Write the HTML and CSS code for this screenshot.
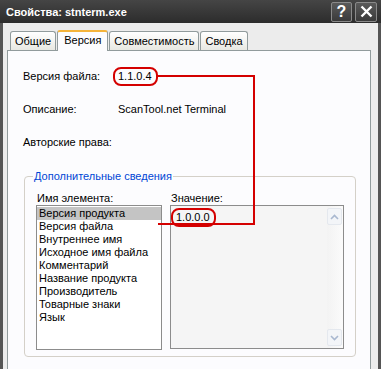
FILE: index.html
```html
<!DOCTYPE html>
<html lang="ru">
<head>
<meta charset="UTF-8">
<title>Свойства: stnterm.exe</title>
<link rel="stylesheet" href="styles.css">
</head>
<body>
<div class="window">
    <div class="titlebar">
        <span class="title">Свойства: stnterm.exe</span>
        <span class="title-btn">?</span>
        <span class="title-btn close">
            <svg width="13" height="13" viewBox="0 0 13 13"><path d="M1.5 1.5 L11.5 11.5 M11.5 1.5 L1.5 11.5" stroke="#fff" stroke-width="2.4"/></svg>
        </span>
    </div>

    <div class="dialog">
        <div class="tabs">
            <div class="tab">Общие</div>
            <div class="tab active">Версия</div>
            <div class="tab">Совместимость</div>
            <div class="tab">Сводка</div>
        </div>

        <div class="panel">
            <div class="field">
                <span class="field-label">Версия файла:</span>
                <span class="field-value"><span class="mark mark-file">1.1.0.4</span></span>
            </div>
            <div class="field">
                <span class="field-label">Описание:</span>
                <span class="field-value">ScanTool.net Terminal</span>
            </div>
            <div class="field">
                <span class="field-label">Авторские права:</span>
                <span class="field-value"></span>
            </div>

            <fieldset class="group">
                <legend>Дополнительные сведения</legend>
                <div class="group-cols">
                    <div class="col col-names">
                        <div class="col-title">Имя элемента:</div>
                        <ul class="listbox">
                            <li class="selected">Версия продукта</li>
                            <li>Версия файла</li>
                            <li>Внутреннее имя</li>
                            <li>Исходное имя файла</li>
                            <li>Комментарий</li>
                            <li>Название продукта</li>
                            <li>Производитель</li>
                            <li>Товарные знаки</li>
                            <li>Язык</li>
                        </ul>
                    </div>
                    <div class="col col-value">
                        <div class="col-title">Значение:</div>
                        <div class="valuebox">
                            <div class="value-text"><span class="mark mark-prod">1.0.0.0</span></div>
                            <div class="scrollbar">
                                <span class="scroll-btn">
                                    <svg width="9" height="6" viewBox="0 0 9 6"><path d="M1 5 L4.5 1.5 L8 5" fill="none" stroke="#a9b8d0" stroke-width="1.6"/></svg>
                                </span>
                                <span class="scroll-btn">
                                    <svg width="9" height="6" viewBox="0 0 9 6"><path d="M1 1 L4.5 4.5 L8 1" fill="none" stroke="#a9b8d0" stroke-width="1.6"/></svg>
                                </span>
                            </div>
                        </div>
                    </div>
                </div>
            </fieldset>
        </div>
    </div>

    <div class="connector"></div>
</div>
</body>
</html>
```

FILE: styles.css
```css
body {
    margin: 0;
    font-family: 'Liberation Sans', Arial, sans-serif;
    font-size: 11px;
    color: #000;
}
.window {
    position: relative;
    width: 381px;
    height: 369px;
    overflow: hidden;
    background-color: #ececec;
}
.titlebar {
    display: flex;
    align-items: center;
    height: 23px;
    padding: 0 4px 0 6px;
    background: linear-gradient(#454545, #2c2c2c);
}
.title {
    flex: 1;
    color: #fff;
    font-weight: bold;
    font-size: 11px;
}
.title-btn {
    display: flex;
    align-items: center;
    justify-content: center;
    width: 19px;
    height: 18px;
    margin-left: 3px;
    border: 1px solid #8a8a8a;
    border-radius: 2px;
    background: linear-gradient(#5a5a5a, #3a3a3a);
    color: #fff;
    font-weight: bold;
    font-size: 16px;
}
.title-btn.close {
    width: 20px;
}
.dialog {
    height: 346px;
    padding: 6px 7px 0 4px;
    border-left: 3px solid #555;
    border-right: 3px solid #555;
    box-sizing: border-box;
}
.tabs {
    display: flex;
    align-items: flex-end;
    height: 21px;
    padding-left: 3px;
}
.tab {
    height: 18px;
    line-height: 19px;
    padding: 0 4px;
    margin-right: 1px;
    border: 1px solid #919b9c;
    border-bottom: none;
    border-radius: 3px 3px 0 0;
    background: linear-gradient(#ffffff, #e8e8e2);
}
.tab.active {
    position: relative;
    height: 19px;
    line-height: 17px;
    padding: 0 6px;
    margin-bottom: -1px;
    border-top: 2px solid #f5b43a;
    background: #fcfcfe;
    z-index: 1;
}
.panel {
    height: 330px;
    padding: 19px 0 0 15px;
    border: 1px solid #919b9c;
    background-color: #fcfcfe;
}
.field {
    display: flex;
    height: 33px;
    white-space: nowrap;
}
.field-label {
    width: 95px;
}
.mark {
    display: inline-block;
    margin: -3px 0 0 -5px;
    padding: 1px 4px 1px 3px;
    border: 2px solid #d40000;
    border-radius: 8px;
    line-height: 13px;
}
.group {
    width: 332px;
    height: 187px;
    margin: 1px 0 0 1px;
    padding: 0 0 0 11px;
    border: 1px solid #d4d0c8;
    border-radius: 4px;
    box-sizing: border-box;
}
.group legend {
    margin-left: -3px;
    padding: 0 1px;
    color: #0046d5;
}
.group-cols {
    display: flex;
    margin-top: 11px;
}
.col-title {
    height: 12px;
    line-height: 11px;
    padding-left: 1px;
}
.col-names {
    width: 134px;
}
.listbox {
    width: 124px;
    height: 142px;
    margin: 0;
    padding: 1px 0 0;
    list-style: none;
    border: 1px solid #8c8c8c;
    background: #fff;
}
.listbox li {
    height: 13px;
    line-height: 13px;
    padding-left: 2px;
}
.listbox li.selected {
    background-color: #c4c4c4;
}
.valuebox {
    display: flex;
    width: 172px;
    height: 142px;
    border: 1px solid #8c8c8c;
    background: #f5f5f5;
}
.value-text {
    flex: 1;
    padding: 2px 0 0 5px;
}
.mark-prod {
    margin-top: 0;
}
.scrollbar {
    display: flex;
    flex-direction: column;
    justify-content: space-between;
    width: 15px;
    padding: 2px 1px 2px 0;
    background: linear-gradient(90deg, #f3f3f3, #fbfbfb);
}
.scroll-btn {
    display: flex;
    align-items: center;
    justify-content: center;
    height: 15px;
    border: 1px solid #e4e8ee;
    border-radius: 2px;
    background: #f3f5f8;
}
.connector {
    position: absolute;
    left: 158px;
    top: 75px;
    width: 95px;
    height: 146px;
    border: 2px solid #d40000;
    border-left: none;
}
```
